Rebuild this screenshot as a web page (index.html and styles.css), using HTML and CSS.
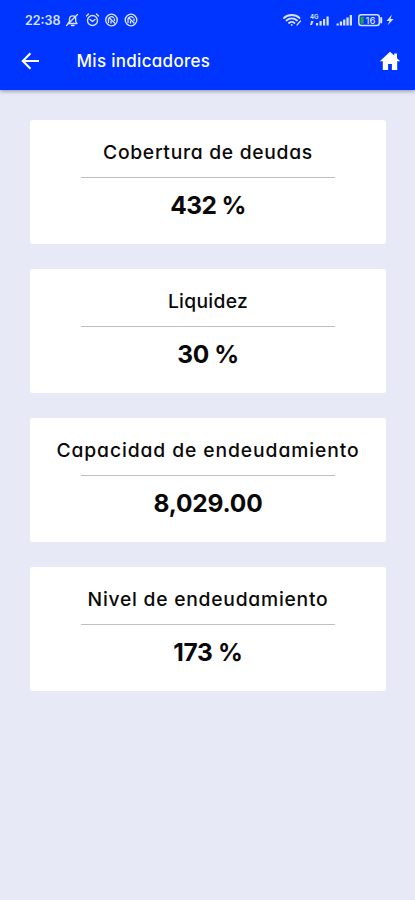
FILE: index.html
```html
<!DOCTYPE html>
<html lang="es">
<head>
<meta charset="utf-8">
<meta name="viewport" content="width=device-width, initial-scale=1">
<title>Mis indicadores</title>
<link rel="stylesheet" href="styles.css">
</head>
<body>
<header class="top">
  <div class="status">
    <span class="time">22:38</span>
    <svg class="status-left" width="74" height="16" viewBox="0 0 74 16" fill="none" stroke="currentColor" stroke-width="1.350" stroke-linecap="round" stroke-linejoin="round">
      <path d="M3 11.5h9L10.700 9.500V6.500C10.700 3 5 3 4.500 6.500V9.500L3 11.500M6.500 13.500h2.500M1.500 13.500L12.500 2.500"/>
      <circle cx="27.500" cy="8.500" r="5"/><path d="M21.500 4l2-2M33.500 4l-2-2M25 7.500l2.500 2 2.500-2"/>
      <circle cx="46.500" cy="8" r="5.800"/><path d="M43.500 10.500V7a3 3 0 0 1 5-1.500M44.500 6l5 5M46 9.500v1.500M49.500 7v1.500"/>
      <circle cx="66" cy="8" r="5.800"/><path d="M63 10.500V7a3 3 0 0 1 5-1.500M64 6l5 5M65.500 9.500v1.500M69 7v1.500"/>
    </svg>
    <svg class="status-right" width="114" height="16" viewBox="0 0 114 16">
      <g fill="none" stroke="currentColor" stroke-width="1.800" stroke-linecap="round">
        <path d="M2 6c4-4 11.500-4 15.500 0M4.500 8.500c3-2.800 7.500-2.800 10.500 0M7 11c1.800-1.500 3.700-1.500 5.500 0M9.700 12.800v.1"/>
        <path d="M15 13l3.500-4" stroke-width="1.200"/>
      </g>
      <text class="net" x="28" y="6.500">4G</text>
      <g fill="currentColor">
        <path d="M28 13l1.200-4 2.300 0-1.500 4zM34 11h2.200v2.500H34zM37.500 9h2.200v4.500h-2.200zM41 7h2.200v6.500h-2.200zM44.500 4.500h2.200v9h-2.200z"/>
        <path d="M54.500 11.500h2.300v2h-2.300zM57.800 9.500h2.300v4h-2.300zM61.100 7.500h2.300v6h-2.300zM64.400 5.500h2.300v8h-2.300zM67.700 3h2.300v10.500h-2.300z"/>
        <path d="M110 2.500l-5.500 6.500h3l-2 4.500 6-6.500h-3z"/>
      </g>
      <rect x="76.800" y="2.800" width="20.500" height="10.700" rx="2.500" fill="none" stroke="currentColor" stroke-width="1.500"/>
      <path d="M99.200 6v4.500" stroke="currentColor" stroke-width="2" stroke-linecap="round"/>
      <path d="M78.500 4.700h3.200v7h-3.200z" fill="#23a14b"/>
      <text class="charge" x="83.500" y="11.500">16</text>
    </svg>
  </div>
  <nav class="bar">
    <svg class="back" width="20" height="20" viewBox="0 0 20 20" fill="none" stroke="currentColor" stroke-width="2.100"><path d="M19 10H3M10.500 2.300L2.800 10l7.700 7.700"/></svg>
    <h1>Mis indicadores</h1>
    <svg class="home" width="22" height="20" viewBox="0 0 22 20" fill="currentColor"><path d="M11 .8L.8 10.200h3V19h5.300v-6h3.800v6h5.300v-8.800h3L18 7.200V2.500h-2.800v2.100z"/></svg>
  </nav>
</header>
<main class="list">
  <section class="card"><h2 class="t1">Cobertura de deudas</h2><hr><p class="v1">432 %</p></section>
  <section class="card"><h2 class="t2">Liquidez</h2><hr><p class="v2">30 %</p></section>
  <section class="card"><h2 class="t3">Capacidad de endeudamiento</h2><hr><p class="v3">8,029.00</p></section>
  <section class="card"><h2 class="t4">Nivel de endeudamiento</h2><hr><p class="v4">173 %</p></section>
</main>
</body>
</html>
```
FILE: styles.css
```css
* { box-sizing: border-box; }
body {
  margin: 0;
  min-height: 900px;
  background: #e7e9f6;
  color: #090909;
  font-family: Inter, "Liberation Sans", sans-serif;
  font-feature-settings: "cv11" 1;
}
h1, h2, p, hr { margin: 0; }
svg { display: block; flex: none; }
.top {
  height: 90px;
  background: #0034ff;
  color: #fff;
  box-shadow: 0 1px 4px rgba(40, 50, 90, .5);
}
.status {
  display: flex;
  align-items: center;
  height: 40px;
  padding: 0 19.500px 0 25px;
  color: #d8e2ff;
}
.time {
  width: 40px;
  font-size: 12.5px;
  font-weight: 600;
}
.status-right { margin-left: auto; }
.net { font-size: 6px; font-weight: 700; fill: currentColor; }
.charge { font-size: 9.5px; font-weight: 500; fill: currentColor; }
.bar {
  display: flex;
  align-items: center;
  height: 42px;
  padding: 0 14px 0 20px;
}
h1 {
  margin-left: 36.500px;
  font-size: 17px;
  font-weight: 550;
  line-height: 24px;
  letter-spacing: .3px;
  white-space: nowrap;
}
.home { margin-left: auto; }
.list {
  display: grid;
  gap: 25.6px;
  padding: 30.200px 29px 0 30px;
}
.card {
  height: 123.500px;
  padding-top: 16.500px;
  background: #fff;
  border-radius: 3px;
  text-align: center;
}
h2 {
  font-size: 19.300px;
  font-weight: 550;
  line-height: 30px;
  white-space: nowrap;
}
hr {
  width: 254px;
  height: 1.500px;
  margin: 10px auto 0;
  border: 0;
  background: #c0c0c0;
}
p {
  margin-top: 10px;
  font-size: 24.500px;
  font-weight: 700;
  line-height: 34px;
}
.t1 { letter-spacing: .7px; }
.t2 { letter-spacing: .3px; }
.t3 { letter-spacing: .9px; }
.t4 { letter-spacing: .75px; }
.v1 { letter-spacing: -.6px; }
.v2 { letter-spacing: -.4px; }
.v3 { letter-spacing: -.2px; }
.v4 { letter-spacing: -.3px; }
```
